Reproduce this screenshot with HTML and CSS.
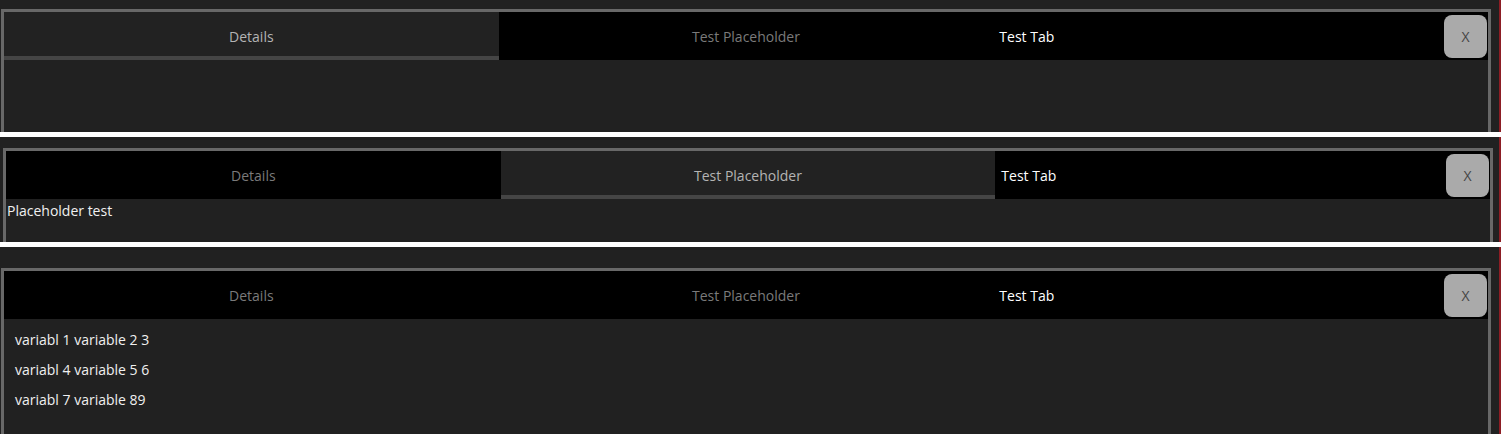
FILE: index.html
```html
<!DOCTYPE html>
<html>
<head>
<meta charset="utf-8" />
<title>Tabs</title>
<link rel="stylesheet" href="styles.css">
</head>
<body>
    <!-- state 1 : Details selected -->
    <div class="shot shot-one">
        <div class="tabset">
            <div class="tabbar">
                <a class="tab active">Details</a>
                <a class="tab">Test Placeholder</a>
                <div class="tab-last">
                    <span class="tab-extra">Test Tab</span>
                    <button class="close">X</button>
                </div>
            </div>
            <div class="tabbody"></div>
        </div>
    </div>
    <div class="divider"></div>

    <!-- state 2 : Test Placeholder selected -->
    <div class="shot shot-two">
        <div class="tabset shifted">
            <div class="tabbar">
                <a class="tab">Details</a>
                <a class="tab active">Test Placeholder</a>
                <div class="tab-last">
                    <span class="tab-extra">Test Tab</span>
                    <button class="close">X</button>
                </div>
            </div>
            <div class="tabbody placeholder">Placeholder test</div>
        </div>
    </div>
    <div class="divider"></div>

    <!-- state 3 : Test Tab selected -->
    <div class="shot shot-three">
        <div class="tabset">
            <div class="tabbar">
                <a class="tab">Details</a>
                <a class="tab">Test Placeholder</a>
                <div class="tab-last">
                    <span class="tab-extra">Test Tab</span>
                    <button class="close">X</button>
                </div>
            </div>
            <div class="tabbody variables">
                <p>variabl 1 variable 2 3</p>
                <p>variabl 4 variable 5 6</p>
                <p>variabl 7 variable 89</p>
            </div>
        </div>
    </div>
</body>
</html>
```

FILE: styles.css
```css
body{
    margin:0;
    background-color:#ffffff;
    font-family:"Open Sans","DejaVu Sans",sans-serif;
    font-size:14px;
}

/* ▼each captured state */
.shot{
    background-color:#212121;
    border-right:2px solid #8c1d24;
    overflow:hidden;
    box-sizing:border-box;
}
.shot-one{height:132px;padding-top:9px;}
.shot-two{height:105px;padding-top:11px;}
.shot-three{height:187px;padding-top:21px;}

.divider{
    height:5px;
    background-color:#ffffff;
}

/* ▼panel */
.tabset{
    width:1490px;
    margin-left:1px;
    border:3px solid #686868;
    border-bottom:none;
    box-sizing:border-box;
    background-color:#212121;
}
.tabset.shifted{margin-left:3px;}

/* ▼tab row */
.tabbar{
    display:grid;
    grid-template-columns:1fr 1fr 1fr;
    height:48px;
    background-color:#000000;
}
.tab{
    display:flex;
    align-items:center;
    justify-content:center;
    color:#7a7a7a;
    text-decoration:none;
    cursor:pointer;
}
.tab.active{
    background-color:#222222;
    color:#b4b4b4;
    box-shadow:inset 0 -4px 0 #454545;   /* bottom marker */
}
.tab-last{
    display:flex;
    align-items:center;
    justify-content:space-between;
    padding-left:6px;
    padding-right:1px;
}
.tab-extra{color:#ffffff;}

.close{
    width:43px;
    height:43px;
    border:none;
    border-radius:8px;
    background-color:#aaaaaa;
    color:#444444;
    font-family:inherit;
    font-size:14px;
    padding:0;
}

/* ▼tab contents */
.tabbody{
    height:200px;
    color:#f0f0f0;
}
.placeholder{
    padding:2px 1px;
}
.variables{
    padding:6px 11px;
}
.variables p{
    margin:0;
    line-height:30px;
}
```
